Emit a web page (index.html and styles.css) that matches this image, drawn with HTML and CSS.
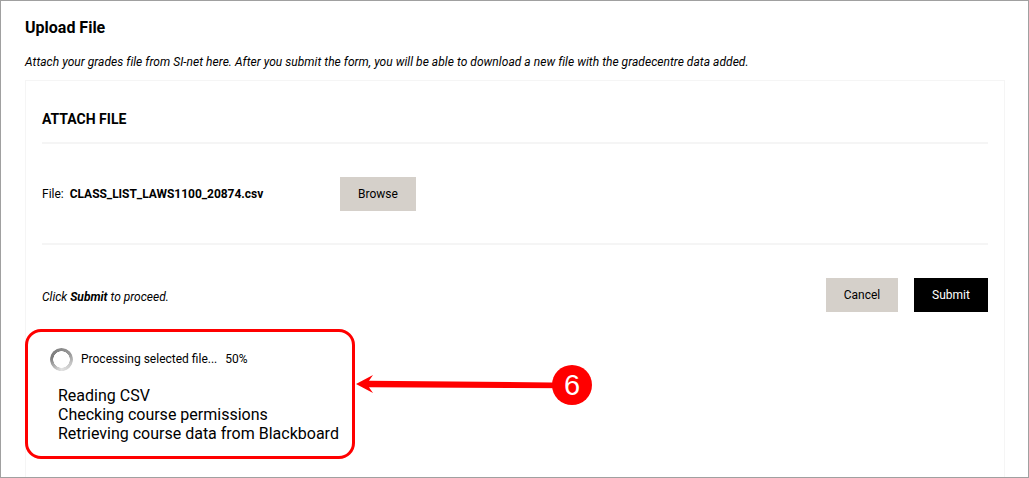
FILE: index.html
```html
<!DOCTYPE html>
<html lang="en">
<head>
    <meta charset="UTF-8">
    <title>Upload File</title>
    <link rel="stylesheet" href="styles.css">
</head>
<body>
    <div class="page">
        <h1>Upload File</h1>
        <p class="intro">Attach your grades file from SI-net here. After you submit the form, you will be able to download a new file with the gradecentre data added.</p>

        <div class="card">
            <h2>ATTACH FILE</h2>

            <div class="file-row">
                <div class="file-label">File:&nbsp; <b>CLASS_LIST_LAWS1100_20874.csv</b></div>
                <button class="btn btn-browse">Browse</button>
            </div>

            <div class="submit-row">
                <div class="hint">Click <b>Submit</b> to proceed.</div>
                <div class="actions">
                    <button class="btn btn-cancel">Cancel</button>
                    <button class="btn btn-submit">Submit</button>
                </div>
            </div>

            <div class="progress">
                <div class="progress-head">
                    <span class="spinner"></span>
                    <span class="progress-text">Processing selected file...</span>
                    <span class="progress-pct">50%</span>
                </div>
                <ul class="steps">
                    <li>Reading CSV</li>
                    <li>Checking course permissions</li>
                    <li>Retrieving course data from Blackboard</li>
                </ul>
            </div>
        </div>
    </div>

    <!-- annotation drawn over the screenshot -->
    <div class="callout-box"></div>
    <svg class="callout-arrow" width="240" height="50" viewBox="0 0 240 50">
        <path d="M216 22.700 L13 20.700 L17 15 L0 24 L17 33 L13 27.300 L216 28.300 Z" fill="#ff0000"/>
        <circle cx="216" cy="25" r="20" fill="#ff0000"/>
    </svg>
    <div class="callout-num">6</div>
</body>
</html>
```

FILE: styles.css
```css
* {
    box-sizing: border-box;
}

html, body {
    margin: 0;
    padding: 0;
}

body {
    width: 1029px;
    height: 478px;
    overflow: hidden;
    position: relative;
    font-family: Roboto, "Liberation Sans", sans-serif;
    color: #000;
    background: #fff;
}

.page {
    height: 478px;
    padding: 0 23px 0 24px;
    border: 1px solid #a0a0a0;
    overflow: hidden;
}

h1 {
    margin: 17px 0 0;
    font-size: 16px;
    line-height: 20px;
    font-weight: 700;
}

.intro {
    margin: 16px 0 0;
    font-size: 12px;
    line-height: 16px;
    font-style: italic;
    letter-spacing: 0.04px;
}

.card {
    height: 420px;
    margin-top: 10px;
    padding: 0 16px;
    border: 1px solid #f5f5f5;
}

h2 {
    margin: 0;
    height: 63px;
    padding-top: 28px;
    font-size: 14px;
    line-height: 20px;
    font-weight: 700;
    border-bottom: 2px solid #f5f5f5;
}

.file-row {
    display: flex;
    align-items: center;
    height: 101px;
    padding-top: 1px;
    border-bottom: 2px solid #f5f5f5;
    font-size: 12px;
}

.file-label {
    width: 298px;
}

.file-label b {
    letter-spacing: -0.03px;
}

.btn {
    height: 34px;
    border: 0;
    padding: 0;
    font-family: inherit;
    font-size: 12px;
    color: #000;
}

.btn-browse {
    width: 76px;
    background: #d5d0ca;
}

.submit-row {
    display: flex;
    justify-content: space-between;
    align-items: center;
    height: 34px;
    margin-top: 33px;
    font-size: 12px;
}

.hint {
    font-style: italic;
    padding-top: 3px;
}

.actions {
    display: flex;
    gap: 16px;
}

.btn-cancel {
    width: 72px;
    background: #d5d0ca;
}

.btn-submit {
    width: 74px;
    background: #000;
    color: #fff;
}

.progress {
    padding: 0 0 0 8px;
    margin-top: 35px;
}

.progress-head {
    display: flex;
    align-items: center;
    font-size: 12px;
    height: 24px;
}

.spinner {
    width: 23px;
    height: 23px;
    border-radius: 50%;
    background: conic-gradient(#8a8a8a 0deg, #9a9a9a 60deg, #c4c4c4 110deg, #e2e2e2 180deg, #b0b0b0 230deg, #7c7c7c 280deg, #8a8a8a 360deg);
    -webkit-mask: radial-gradient(circle, transparent 8px, #000 8.500px);
    mask: radial-gradient(circle, transparent 8px, #000 8.500px);
    margin-right: 8px;
}

.progress-pct {
    margin-left: 8px;
}

.steps {
    list-style: none;
    margin: 15px 0 0 8px;
    padding: 0;
    font-size: 16px;
    line-height: 19px;
}

/* annotation */
.callout-box {
    position: absolute;
    left: 25px;
    top: 329px;
    width: 330px;
    height: 130px;
    border: 3px solid #ff0000;
    border-radius: 16px;
}

.callout-arrow {
    position: absolute;
    left: 356px;
    top: 360px;
}

.callout-num {
    position: absolute;
    left: 552px;
    top: 365px;
    width: 40px;
    height: 40px;
    text-align: center;
    font-family: "Liberation Sans", sans-serif;
    font-size: 29px;
    line-height: 40px;
    color: #fff;
}
```
